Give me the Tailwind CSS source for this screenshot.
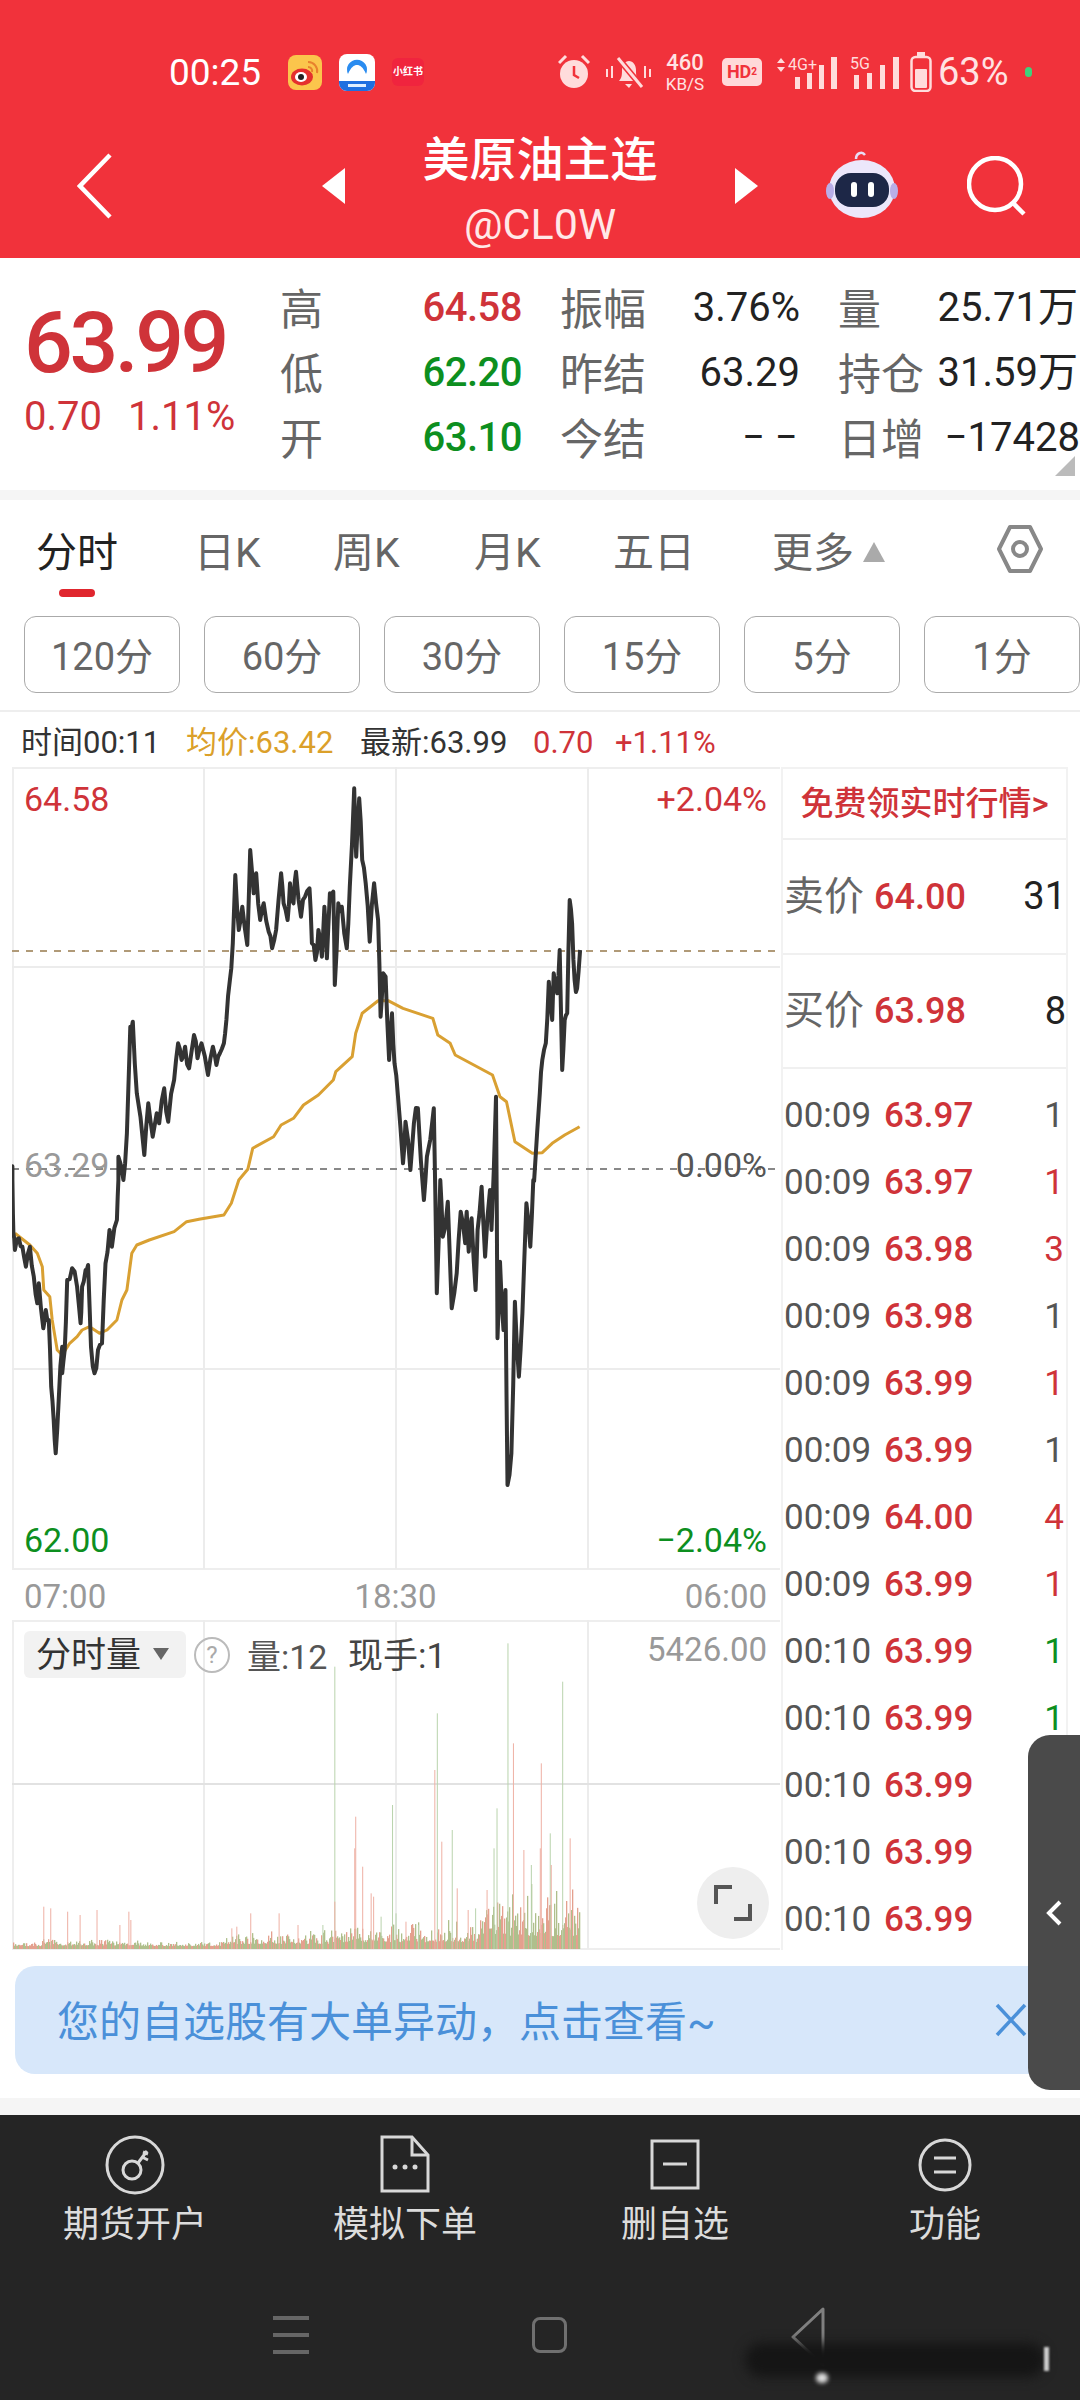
<!DOCTYPE html>
<html lang="zh-CN">
<head>
    <meta charset="UTF-8">
    <meta name="viewport" content="width=device-width, initial-scale=1.0">
    <title>美原油主连</title>
    <script src="https://cdn.jsdelivr.net/npm/@tailwindcss/browser@4"></script>
</head>
<body class="bg-white">
<div class="relative w-[1080px] h-[2400px] overflow-hidden bg-white font-['Roboto','Noto_Sans_CJK_SC',sans-serif]">

    <!-- Header -->
    <div class="h-[258px] bg-[#f1323b] text-white">
        <!-- Status bar -->
        <div class="flex items-center h-[108px] mt-0 pt-[36px] pl-[169px] text-[#ffe3e3]">
            <span class="w-[93px] text-[37px] leading-none whitespace-nowrap text-[#fff]">00:25</span>
            <svg class="ml-[26px] shrink-0" width="34" height="35" viewBox="0 0 34 35"><rect width="34" height="35" rx="8" fill="#fbc54c"/><ellipse cx="14" cy="22" rx="11" ry="8.5" fill="#e5302d"/><ellipse cx="13" cy="22" rx="6" ry="5" fill="#fff"/><circle cx="13" cy="22" r="3" fill="#222"/><path d="M20 7a9 9 0 0 1 9 11M20 12a4 4 0 0 1 4 5" fill="none" stroke="#e8812d" stroke-width="2"/></svg>
            <svg class="ml-[17px] shrink-0" width="36" height="37" viewBox="0 0 36 37"><rect width="36" height="37" rx="8" fill="#fff"/><path d="M0 27h36v2a8 8 0 0 1-8 8H8a8 8 0 0 1-8-8z" fill="#1f6fe0"/><path d="M9 20a10 10 0 1 1 18 0c-3-7-6-9-9-9s-6 2-9 9z" fill="#2a8cf0"/><rect x="9" y="30" width="18" height="3" fill="#dfeeff"/></svg>
            <div class="ml-[17px] w-[32px] h-[28px] rounded-[6px] bg-[#f0243e] flex items-center justify-center overflow-hidden"><span class="text-[10px] leading-none whitespace-nowrap text-white font-bold">小红书</span></div>
            <svg class="ml-[134px] shrink-0" width="32" height="36" viewBox="0 0 32 36"><circle cx="16" cy="20" r="14" fill="#ffdcdc"/><path d="M16 12v9l5 3" fill="none" stroke="#f1323b" stroke-width="2.5"/><path d="M1 9l7-7M31 9l-7-7" stroke="#ffdcdc" stroke-width="3"/></svg>
            <svg class="ml-[15px] shrink-0" width="47" height="36" viewBox="0 0 47 36"><path d="M14 27c3-3 3-7 3-11 0-5 3-9 7-9s7 4 7 9c0 4 0 8 3 11z" fill="#ffdcdc"/><path d="M20 30h7l-3 4z" fill="#ffdcdc"/><path d="M13 4l24 29" stroke="#f1323b" stroke-width="6"/><path d="M13 4l24 29" stroke="#ffdcdc" stroke-width="3"/><path d="M2 15v8M7 12v12M40 12v12M45 15v8" stroke="#ffdcdc" stroke-width="2"/></svg>
            <div class="ml-[10px] w-[46px] flex flex-col items-center">
                <span class="block h-[22px] text-[22px] leading-[22px] font-medium">460</span>
                <span class="block h-[18px] mt-[1px] text-[17px] leading-[18px] whitespace-nowrap">KB/S</span>
            </div>
            <div class="ml-[14px] w-[40px] h-[28px] rounded-[5px] bg-[#ffd9d9] flex items-center justify-center"><span class="text-[18px] leading-none font-bold text-[#f1323b]">HD</span><span class="text-[10px] leading-none font-bold text-[#f1323b]">2</span></div>
            <svg class="ml-[13px] shrink-0" width="63" height="34" viewBox="0 0 63 34"><path d="M2 8l4-5 4 5zM2 12l4 5 4-5z" fill="#ffdcdc"/><text x="13" y="15" font-size="16" font-family="Roboto" fill="#ffdcdc">4G+</text><path d="M20 22h5v12h-5zM32 18h5v16h-5zM44 10h5v24h-5zM56 2h6v32h-6z" fill="#ffdcdc"/></svg>
            <svg class="ml-[12px] shrink-0" width="50" height="34" viewBox="0 0 50 34"><text x="0" y="14" font-size="16" font-family="Roboto" fill="#ffdcdc">5G</text><path d="M4 20h5v14H4zM17 18h5v16h-5zM30 10h5v24h-5zM43 2h6v32h-6z" fill="#ffdcdc"/></svg>
            <svg class="ml-[10px] shrink-0" width="22" height="40" viewBox="0 0 22 40"><rect x="1.5" y="5" width="19" height="34" rx="4" fill="none" stroke="#ffdcdc" stroke-width="2.5"/><rect x="7" y="0" width="8" height="4" fill="#ffdcdc"/><rect x="5" y="17" width="12" height="19" rx="1" fill="#ffdcdc"/></svg>
            <span class="ml-[6px] w-[71px] text-[38px] leading-none whitespace-nowrap">63%</span>
            <span class="ml-[16px] w-[7px] h-[10px] rounded-full bg-[#3fd17c]"></span>
        </div>
        <!-- Title row -->
        <div class="flex items-center h-[132px] mt-[18px] pb-[12px] pl-[77px]">
            <svg class="shrink-0" width="35" height="66" viewBox="0 0 35 66"><path d="M33 2L3 33l30 31" fill="none" stroke="#fff" stroke-width="4.5"/></svg>
            <svg class="ml-[210px] shrink-0" width="23" height="36" viewBox="0 0 23 36"><path d="M23 0v36L0 18z" fill="#fff"/></svg>
            <div class="w-[390px] flex flex-col items-center -mb-[12px]">
                <span class="h-[64px] text-[47px] leading-[64px] font-medium whitespace-nowrap">美原油主连</span>
                <span class="h-[64px] text-[43px] leading-[64px] text-[#ffe8e8] whitespace-nowrap">@CL0W</span>
            </div>
            <svg class="shrink-0" width="23" height="36" viewBox="0 0 23 36"><path d="M0 0v36l23-18z" fill="#fff"/></svg>
            <svg class="ml-[68px] shrink-0" width="72" height="70" viewBox="0 0 72 70"><path d="M30 8c0-6 6-8 9-4" fill="none" stroke="#e8dcf5" stroke-width="2.5"/><ellipse cx="36" cy="38" rx="33" ry="29" fill="#ece7fb"/><ellipse cx="4" cy="40" rx="4" ry="8" fill="#b9aee8"/><ellipse cx="68" cy="40" rx="4" ry="8" fill="#b9aee8"/><rect x="9" y="22" width="54" height="34" rx="16" fill="#1d2747"/><rect x="25" y="31" width="6" height="15" rx="3" fill="#fff"/><rect x="42" y="31" width="6" height="15" rx="3" fill="#fff"/></svg>
            <svg class="ml-[69px] shrink-0" width="60" height="60" viewBox="0 0 60 60"><circle cx="28" cy="28" r="26" fill="none" stroke="#fff" stroke-width="4.5"/><path d="M46 47l11 11" stroke="#fff" stroke-width="4.5"/></svg>
        </div>
    </div>

    <!-- Quote -->
    <div class="relative flex h-[232px] bg-white">
        <div class="w-[280px] shrink-0 pl-[24px] pt-[39px]">
            <div class="text-[86px] leading-[92px] font-medium tracking-[-3.5px] text-[#cf3339] whitespace-nowrap">63.99</div>
            <div class="flex mt-[6px] text-[40px] leading-[44px] text-[#cf3339] whitespace-nowrap">
                <span class="w-[104px]">0.70</span><span>1.11%</span>
            </div>
        </div>
        <div class="grid grid-cols-[242px_240px_240px] gap-x-[38px] auto-rows-[65px] pt-[20px] text-[43px] text-[#666] whitespace-nowrap items-center">
            <div class="flex justify-between"><span>高</span><span class="text-[#cf3339] font-medium text-[40px] tracking-[-0.5px]">64.58</span></div>
            <div class="flex justify-between"><span>振幅</span><span class="text-[#222] text-[40px]">3.76%</span></div>
            <div class="flex justify-between"><span>量</span><span class="text-[#222] text-[40px]">25.71万</span></div>
            <div class="flex justify-between"><span>低</span><span class="text-[#0d8f1f] font-medium text-[40px] tracking-[-0.5px]">62.20</span></div>
            <div class="flex justify-between"><span>昨结</span><span class="text-[#222] text-[40px]">63.29</span></div>
            <div class="flex justify-between"><span>持仓</span><span class="text-[#222] text-[40px]">31.59万</span></div>
            <div class="flex justify-between"><span>开</span><span class="text-[#0d8f1f] font-medium text-[40px] tracking-[-0.5px]">63.10</span></div>
            <div class="flex justify-between"><span>今结</span><span class="text-[#222] text-[40px] tracking-[10px] -mr-[8px]">−−</span></div>
            <div class="flex justify-between"><span>日增</span><span class="text-[#222] text-[40px] -mr-[2px]">−17428</span></div>
        </div>
        <svg class="absolute right-[5px] bottom-[14px]" width="20" height="20" viewBox="0 0 20 20"><path d="M20 0v20H0z" fill="#bbb"/></svg>
    </div>
    <div class="h-[10px] bg-[#f5f5f5]"></div>

    <!-- Period tabs -->
    <div class="flex items-start h-[116px] pt-[31px] pl-[36px] text-[41px] leading-[44px] text-[#666] whitespace-nowrap">
        <div class="w-[82px] flex flex-col items-center text-[#222]"><span>分时</span><span class="block mt-[14px] w-[36px] h-[8px] rounded-full bg-[#e0262e]"></span></div>
        <span class="ml-[76px] w-[66px]">日K</span>
        <span class="ml-[73px] w-[67px]">周K</span>
        <span class="ml-[74px] w-[66px]">月K</span>
        <span class="ml-[73px] w-[77px]">五日</span>
        <span class="ml-[82px] w-[82px]">更多</span>
        <svg class="ml-[9px] mt-[11px] shrink-0" width="22" height="20" viewBox="0 0 22 20"><path d="M11 0l11 20H0z" fill="#aaa"/></svg>
        <svg class="ml-[112px] -mt-[7px] shrink-0" width="46" height="50" viewBox="0 0 46 50"><path d="M13 3h20l11 22-11 22H13L2 25z" fill="none" stroke="#888" stroke-width="4" stroke-linejoin="round"/><circle cx="23" cy="25" r="7" fill="none" stroke="#888" stroke-width="4"/></svg>
    </div>

    <!-- Interval buttons -->
    <div class="flex gap-[24px] pl-[24px] h-[96px] border-b-2 border-[#eee]">
        <div class="w-[156px] h-[77px] shrink-0 flex items-center justify-center pt-[5px] rounded-[12px] border border-[#aaa] text-[38px] text-[#666]">120分</div>
        <div class="w-[156px] h-[77px] shrink-0 flex items-center justify-center pt-[5px] rounded-[12px] border border-[#aaa] text-[38px] text-[#666]">60分</div>
        <div class="w-[156px] h-[77px] shrink-0 flex items-center justify-center pt-[5px] rounded-[12px] border border-[#aaa] text-[38px] text-[#666]">30分</div>
        <div class="w-[156px] h-[77px] shrink-0 flex items-center justify-center pt-[5px] rounded-[12px] border border-[#aaa] text-[38px] text-[#666]">15分</div>
        <div class="w-[156px] h-[77px] shrink-0 flex items-center justify-center pt-[5px] rounded-[12px] border border-[#aaa] text-[38px] text-[#666]">5分</div>
        <div class="w-[156px] h-[77px] shrink-0 flex items-center justify-center pt-[5px] rounded-[12px] border border-[#aaa] text-[38px] text-[#666]">1分</div>
    </div>

    <!-- Crosshair info -->
    <div class="flex items-center h-[55px] pl-[21px] pt-[5px] text-[31px] leading-none whitespace-nowrap">
        <span class="w-[165px] text-[#333]">时间00:11</span>
        <span class="w-[174px] text-[#dba02a]">均价:63.42</span>
        <span class="w-[173px] text-[#333]">最新:63.99</span>
        <span class="w-[82px] text-[#cf3339]">0.70</span>
        <span class="text-[#cf3339]">+1.11%</span>
    </div>

    <!-- Charts + trade list -->
    <div class="flex h-[1183px]">
        <div class="w-[780px] shrink-0 pl-[12px]">
            <div class="relative h-[803px] border-t-2 border-l-2 border-b-2 border-[#eee]">
                <svg id="priceChart" class="absolute -left-[2px] -top-[2px]" width="768" height="803" viewBox="12 767 768 803"></svg>
                <span class="absolute left-[10px] top-[10px] text-[34px] leading-[40px] text-[#cf3339]">64.58</span>
                <span class="absolute right-[13px] top-[10px] text-[34px] leading-[40px] text-[#cf3339]">+2.04%</span>
                <span class="absolute left-[10px] top-[376px] text-[34px] leading-[40px] text-[#999]">63.29</span>
                <span class="absolute right-[13px] top-[376px] text-[34px] leading-[40px] text-[#555]">0.00%</span>
                <span class="absolute left-[10px] bottom-[8px] text-[34px] leading-[40px] text-[#0d8f1f]">62.00</span>
                <span class="absolute right-[13px] bottom-[8px] text-[34px] leading-[40px] text-[#0d8f1f]">−2.04%</span>
            </div>
            <div class="flex justify-between items-center h-[50px] pt-[3px] pl-[12px] pr-[13px] text-[33px] text-[#999]">
                <span>07:00</span><span>18:30</span><span>06:00</span>
            </div>
            <div class="relative h-[330px] border-t-2 border-l-2 border-b-2 border-[#eee]">
                <svg id="volumeChart" class="absolute -left-[2px] -top-[2px]" width="768" height="330" viewBox="12 1620 768 330"></svg>
                <div class="absolute left-[10px] top-[9px] flex items-center h-[47px] w-[162px] pl-[12px] pt-[4px] rounded-[6px] bg-[#f2f2f2] text-[35px] text-[#333] whitespace-nowrap">
                    <span>分时量</span>
                    <svg class="ml-[12px] -mt-[6px]" width="16" height="12" viewBox="0 0 16 12"><path d="M0 0h16L8 12z" fill="#666"/></svg>
                </div>
                <div class="absolute left-[180px] top-[15px] w-[36px] h-[36px] flex items-center justify-center rounded-full border-2 border-[#bbb] text-[24px] leading-none text-[#aaa]">?</div>
                <span class="absolute left-[233px] top-[13px] text-[34px] leading-[44px] text-[#555] whitespace-nowrap">量:12</span>
                <span class="absolute left-[334px] top-[13px] text-[35px] leading-[44px] text-[#444] whitespace-nowrap">现手:1</span>
                <span class="absolute right-[13px] top-[6px] text-[33px] leading-[44px] text-[#999]">5426.00</span>
                <div class="absolute left-[683px] top-[245px] w-[72px] h-[72px] rounded-full bg-[#eee] flex items-center justify-center">
                    <svg width="38" height="38" viewBox="0 0 38 38"><path d="M2 20V3h16M36 20v15H20" fill="none" stroke="#555" stroke-width="4"/></svg>
                </div>
            </div>
        </div>

        <!-- Trade list -->
        <div class="w-[287px] h-[1183px] ml-[1px] shrink-0 border-x-2 border-[#f2f2f2] border-t-2 whitespace-nowrap">
            <div class="h-[71px] flex items-center justify-center border-b-2 border-[#f0f0f0] text-[33px] font-medium text-[#cf3339]">免费领实时行情&gt;</div>
            <div class="h-[115px] flex items-center pl-[1px] border-b-2 border-[#f0f0f0]">
                <span class="w-[90px] text-[40px] text-[#666]">卖价</span><span class="text-[36px] font-medium text-[#cf3339]">64.00</span><span class="ml-auto text-[38px] text-[#222]">31</span>
            </div>
            <div class="h-[114px] flex items-center pl-[1px] border-b-2 border-[#f0f0f0]">
                <span class="w-[90px] text-[40px] text-[#666]">买价</span><span class="text-[36px] font-medium text-[#cf3339]">63.98</span><span class="ml-auto text-[38px] text-[#222]">8</span>
            </div>
            <div class="pt-[14px] pl-[1px] pr-[2px] text-[35px]">
                <div class="h-[67px] flex items-center"><span class="w-[100px] text-[#555]">00:09</span><span class="font-medium text-[#cf3339]">63.97</span><span class="ml-auto text-[#555]">1</span></div>
                <div class="h-[67px] flex items-center"><span class="w-[100px] text-[#555]">00:09</span><span class="font-medium text-[#cf3339]">63.97</span><span class="ml-auto text-[#cf3339]">1</span></div>
                <div class="h-[67px] flex items-center"><span class="w-[100px] text-[#555]">00:09</span><span class="font-medium text-[#cf3339]">63.98</span><span class="ml-auto text-[#cf3339]">3</span></div>
                <div class="h-[67px] flex items-center"><span class="w-[100px] text-[#555]">00:09</span><span class="font-medium text-[#cf3339]">63.98</span><span class="ml-auto text-[#555]">1</span></div>
                <div class="h-[67px] flex items-center"><span class="w-[100px] text-[#555]">00:09</span><span class="font-medium text-[#cf3339]">63.99</span><span class="ml-auto text-[#cf3339]">1</span></div>
                <div class="h-[67px] flex items-center"><span class="w-[100px] text-[#555]">00:09</span><span class="font-medium text-[#cf3339]">63.99</span><span class="ml-auto text-[#555]">1</span></div>
                <div class="h-[67px] flex items-center"><span class="w-[100px] text-[#555]">00:09</span><span class="font-medium text-[#cf3339]">64.00</span><span class="ml-auto text-[#cf3339]">4</span></div>
                <div class="h-[67px] flex items-center"><span class="w-[100px] text-[#555]">00:09</span><span class="font-medium text-[#cf3339]">63.99</span><span class="ml-auto text-[#cf3339]">1</span></div>
                <div class="h-[67px] flex items-center"><span class="w-[100px] text-[#555]">00:10</span><span class="font-medium text-[#cf3339]">63.99</span><span class="ml-auto text-[#0d8f1f]">1</span></div>
                <div class="h-[67px] flex items-center"><span class="w-[100px] text-[#555]">00:10</span><span class="font-medium text-[#cf3339]">63.99</span><span class="ml-auto text-[#0d8f1f]">1</span></div>
                <div class="h-[67px] flex items-center"><span class="w-[100px] text-[#555]">00:10</span><span class="font-medium text-[#cf3339]">63.99</span></div>
                <div class="h-[67px] flex items-center"><span class="w-[100px] text-[#555]">00:10</span><span class="font-medium text-[#cf3339]">63.99</span></div>
                <div class="h-[67px] flex items-center"><span class="w-[100px] text-[#555]">00:10</span><span class="font-medium text-[#cf3339]">63.99</span></div>
            </div>
        </div>
    </div>

    <!-- Notice -->
    <div class="h-[148px] pt-[16px] pl-[15px] pr-[20px]">
        <div class="flex items-center justify-between h-[108px] pl-[42px] pr-[33px] pt-[4px] rounded-[20px] bg-[#d7e7fa] text-[42px] text-[#4a90d9] whitespace-nowrap">
            <span>您的自选股有大单异动，点击查看~</span>
            <svg class="-mt-[4px]" width="32" height="34" viewBox="0 0 32 34"><path d="M2 2l28 30M30 2L2 32" fill="none" stroke="#4a90d9" stroke-width="3.5"/></svg>
        </div>
    </div>
    <div class="h-[17px] bg-[#f5f5f5]"></div>

    <!-- Bottom toolbar -->
    <div class="h-[285px] bg-[#252525] text-[#dcdcdc]">
        <div class="grid grid-cols-4 pt-[20px]">
            <div class="flex flex-col items-center">
                <svg width="60" height="60" viewBox="0 0 60 60"><circle cx="30" cy="30" r="28" fill="none" stroke="#d8d8d8" stroke-width="3"/><circle cx="27" cy="35" r="9" fill="none" stroke="#d8d8d8" stroke-width="3"/><path d="M33 28l9-12M37 22l6 3M38 17l5 2" fill="none" stroke="#d8d8d8" stroke-width="3"/></svg>
                <span class="mt-[5px] text-[36px] leading-[50px]">期货开户</span>
            </div>
            <div class="flex flex-col items-center">
                <svg width="60" height="60" viewBox="0 0 60 60"><path d="M7 2h30l16 18v36H7z" fill="none" stroke="#d8d8d8" stroke-width="3"/><path d="M37 2v18h16" fill="none" stroke="#d8d8d8" stroke-width="3"/><circle cx="20" cy="32" r="2.5" fill="#d8d8d8"/><circle cx="30" cy="32" r="2.5" fill="#d8d8d8"/><circle cx="40" cy="32" r="2.5" fill="#d8d8d8"/></svg>
                <span class="mt-[5px] text-[36px] leading-[50px]">模拟下单</span>
            </div>
            <div class="flex flex-col items-center">
                <svg width="60" height="60" viewBox="0 0 60 60"><rect x="7" y="6" width="46" height="47" fill="none" stroke="#d8d8d8" stroke-width="3"/><path d="M18 29h24" stroke="#d8d8d8" stroke-width="3"/></svg>
                <span class="mt-[5px] text-[36px] leading-[50px]">删自选</span>
            </div>
            <div class="flex flex-col items-center">
                <svg width="60" height="60" viewBox="0 0 60 60"><circle cx="30" cy="30" r="25" fill="none" stroke="#d8d8d8" stroke-width="3"/><path d="M19 23h22M19 37h22" stroke="#d8d8d8" stroke-width="3"/></svg>
                <span class="mt-[5px] text-[36px] leading-[50px]">功能</span>
            </div>
        </div>
        <!-- Phone nav bar -->
        <div class="relative flex items-center h-[40px] mt-[65px] pl-[273px]">
            <div class="w-[36px] flex flex-col gap-[13px]"><span class="h-[4px] bg-[#666]"></span><span class="h-[4px] bg-[#666]"></span><span class="h-[4px] bg-[#666]"></span></div>
            <div class="ml-[223px] w-[35px] h-[36px] rounded-[8px] border-[3px] border-[#707070]"></div>
            <svg class="ml-[223px] mt-[4px]" width="36" height="60" viewBox="0 0 36 60"><path d="M33 2L3 30l30 28z" fill="none" stroke="#808080" stroke-width="3" stroke-linejoin="round"/></svg>
            <div class="absolute left-[745px] top-[28px] w-[300px] h-[34px] rounded-full bg-[#151515] blur-[6px]"></div>
            <span class="absolute left-[816px] top-[58px] w-[12px] h-[10px] rounded-full bg-[#ddd] blur-[2px]"></span>
            <span class="absolute left-[1044px] top-[32px] w-[5px] h-[24px] bg-[#ccc] blur-[1px]"></span>
        </div>
    </div>

    <!-- Floating side handle -->
    <div class="absolute right-0 top-[1735px] w-[52px] h-[355px] rounded-l-[22px] bg-[#4a4a4a] flex items-center justify-center">
        <svg width="18" height="26" viewBox="0 0 18 26"><path d="M15 2L4 13l11 11" fill="none" stroke="#fff" stroke-width="4"/></svg>
    </div>
</div>

<script>
    const NS = 'http://www.w3.org/2000/svg';

    // traced from the reference, in zoomed crop coordinates
    const lowX = (zx) => zx / 2.01;
    const upperY = (zy) => 760 + zy / 3;
    const lowerY = (zy) => 1180 + zy / 3;

    const priceLine = [
        [25,upperY(1226)],[25,lowerY(0)],[27,lowerY(160)],[30,lowerY(210)],[38,lowerY(175)],[45,lowerY(200)],[52,lowerY(260)],[60,lowerY(200)],[68,lowerY(290)],[75,lowerY(370)],[78,lowerY(310)],[87,lowerY(445)],[92,lowerY(390)],[98,lowerY(420)],[103,lowerY(620)],[108,lowerY(720)],[112,lowerY(820)],[118,lowerY(660)],[125,lowerY(500)],[125,lowerY(580)],[130,lowerY(510)],[135,lowerY(300)],[145,lowerY(265)],[155,lowerY(320)],[162,lowerY(430)],[165,lowerY(320)],[172,lowerY(270)],[177,lowerY(255)],[183,lowerY(500)],[190,lowerY(580)],[197,lowerY(510)],[205,lowerY(490)],[212,lowerY(250)],[220,lowerY(150)],[225,lowerY(200)],[235,lowerY(120)],[238,lowerY(0)],
        [238,upperY(1190)],[248,upperY(1260)],[255,upperY(1120)],[262,upperY(800)],[267,upperY(785)],[275,upperY(1000)],[290,upperY(1185)],[298,upperY(1030)],[307,upperY(1130)],[315,upperY(1060)],[320,upperY(1090)],[330,upperY(985)],[338,upperY(1085)],[350,upperY(960)],[358,upperY(850)],[365,upperY(900)],[372,upperY(860)],[380,upperY(925)],[390,upperY(825)],[397,upperY(895)],[405,upperY(850)],[418,upperY(945)],[428,upperY(860)],[435,upperY(915)],[442,upperY(880)],[450,upperY(850)],[455,upperY(780)],[462,upperY(660)],[468,upperY(550)],[473,upperY(345)],[480,upperY(510)],[487,upperY(440)],[497,upperY(555)],[503,upperY(270)],[510,upperY(400)],[515,upperY(340)],[523,upperY(480)],[530,upperY(430)],[540,upperY(515)],[547,upperY(565)],[555,upperY(510)],[565,upperY(340)],[570,upperY(430)],[578,upperY(480)],[583,upperY(370)],[590,upperY(430)],[595,upperY(335)],[605,upperY(470)],[613,upperY(410)],[622,upperY(385)],[627,upperY(550)],[634,upperY(600)],[640,upperY(510)],[647,upperY(590)],[652,upperY(440)],[657,upperY(595)],[663,upperY(400)],[670,upperY(395)],[673,upperY(675)],[680,upperY(430)],[687,upperY(440)],[697,upperY(565)],[703,upperY(380)],[712,upperY(85)],[716,upperY(290)],[722,upperY(115)],[728,upperY(300)],[735,upperY(370)],[743,upperY(545)],[752,upperY(370)],[760,upperY(480)],[765,upperY(770)],[770,upperY(640)],[775,upperY(650)],[782,upperY(900)],[788,upperY(760)],[793,upperY(910)],[800,upperY(1010)],[810,upperY(1210)],[815,upperY(1085)],[825,upperY(1230)],[832,upperY(1090)],[840,upperY(1045)],[852,lowerY(60)],[858,upperY(1190)],[872,upperY(1045)],[878,lowerY(340)],[885,lowerY(0)],[890,lowerY(170)],[900,lowerY(65)],[908,lowerY(385)],[918,lowerY(280)],[926,lowerY(95)],[935,lowerY(190)],[938,lowerY(95)],[942,lowerY(215)],[948,lowerY(115)],[956,lowerY(330)],[960,lowerY(150)],[968,lowerY(20)],[975,lowerY(230)],[985,lowerY(30)],[988,lowerY(150)],[997,upperY(1010)],[1000,lowerY(475)],[1005,lowerY(245)],[1012,lowerY(450)],[1016,lowerY(330)],[1020,lowerY(915)],[1028,lowerY(820)],[1035,lowerY(365)],[1043,lowerY(590)],[1050,lowerY(400)],[1058,lowerY(70)],[1066,lowerY(200)],[1072,lowerY(0)],
        [1075,upperY(1230)],[1085,upperY(1000)],[1090,upperY(900)],[1097,upperY(850)],[1103,upperY(665)],[1110,upperY(780)],[1113,upperY(640)],[1120,upperY(700)],[1125,upperY(570)],[1130,upperY(930)],[1135,upperY(780)],[1140,upperY(760)],[1145,upperY(420)],[1150,upperY(490)],[1155,upperY(660)],[1160,upperY(685)],[1166,upperY(570)]
    ];

    const avgLine = [
        [30,lowerY(160)],[60,lowerY(195)],[75,lowerY(220)],[85,lowerY(260)],[88,lowerY(330)],[100,lowerY(350)],[105,lowerY(420)],[115,lowerY(510)],[125,lowerY(525)],[140,lowerY(490)],[155,lowerY(470)],[165,lowerY(450)],[180,lowerY(440)],[200,lowerY(460)],[215,lowerY(450)],[235,lowerY(420)],[245,lowerY(360)],[255,lowerY(330)],[265,lowerY(220)],[275,lowerY(195)],[300,lowerY(180)],[350,lowerY(155)],[375,lowerY(125)],[400,lowerY(118)],[450,lowerY(105)],[465,lowerY(70)],[480,lowerY(0)],
        [498,upperY(1228)],[508,upperY(1165)],[550,upperY(1130)],[565,upperY(1095)],[590,upperY(1075)],[610,upperY(1035)],[640,upperY(1005)],[670,upperY(960)],[675,upperY(935)],[708,upperY(890)],[715,upperY(820)],[728,upperY(760)],[760,upperY(722)],[780,upperY(722)],[810,upperY(745)],[870,upperY(775)],[880,upperY(825)],[905,upperY(850)],[915,upperY(885)],[990,upperY(945)],[1005,upperY(1010)],[1018,upperY(1025)],[1035,upperY(1145)],[1070,upperY(1180)],[1090,upperY(1178)],[1110,upperY(1150)],[1135,upperY(1125)],[1165,upperY(1100)]
    ];

    // spikes: zoom x, zoom y (bar top in the volume crop), colour
    const spikes = [
        [672,200,'g'],[714,650,'r'],[712,745,'r'],[728,800,'r'],[788,615,'g'],[873,510,'r'],[878,340,'g'],[887,725,'r'],[908,690,'g'],[918,865,'r'],[998,625,'g'],[1020,130,'g'],[1031,430,'r'],[1052,750,'r'],[1067,795,'g'],[1087,490,'r'],[1085,745,'r'],[1105,700,'g'],[1107,795,'r'],[1130,245,'g'],[1145,715,'r'],[992,745,'g'],[978,870,'r'],[955,925,'g'],[940,930,'r'],
        [87,920,'r'],[101,925,'r'],[135,935,'r'],[160,945,'r'],[194,930,'r'],[240,975,'r'],[258,935,'r'],[262,960,'r'],[465,985,'r'],[475,980,'r'],[503,940,'r'],[560,940,'r'],[598,975,'r'],[648,975,'g'],[672,905,'r'],[745,880,'r'],[750,890,'r'],[765,950,'g'],[795,940,'g'],[815,965,'r'],[840,975,'g']
    ];

    let seed = 7;
    function rand() {
        seed = (seed * 16807) % 2147483647;
        return seed / 2147483647;
    }

    function add(svg, name, attrs) {
        const el = document.createElementNS(NS, name);
        for (const k in attrs) el.setAttribute(k, attrs[k]);
        svg.appendChild(el);
    }

    function gridLine(svg, x1, y1, x2, y2, color) {
        add(svg, 'line', { x1, y1, x2, y2, stroke: color || '#ececec', 'stroke-width': 2 });
    }

    function toPoints(line, jitter) {
        const out = [];
        line.forEach((p, i) => {
            out.push(lowX(p[0]).toFixed(1) + ',' + p[1].toFixed(1));
            const next = line[i + 1];
            if (jitter && next) {
                const y = (p[1] + next[1]) / 2 + (rand() - 0.5) * jitter;
                out.push(lowX((p[0] + next[0]) / 2).toFixed(1) + ',' + y.toFixed(1));
            }
        });
        return out.join(' ');
    }

    const price = document.getElementById('priceChart');
    [204, 396, 588].forEach((x) => gridLine(price, x, 767, x, 1569));
    [967, 1369].forEach((y) => gridLine(price, 12, y, 780, y));
    add(price, 'line', { x1: 12, y1: 951, x2: 780, y2: 951, stroke: '#b09a78', 'stroke-width': 2, 'stroke-dasharray': '7 7' });
    add(price, 'line', { x1: 12, y1: 1169, x2: 780, y2: 1169, stroke: '#888', 'stroke-width': 2, 'stroke-dasharray': '7 7' });
    add(price, 'polyline', { points: toPoints(avgLine, 0), fill: 'none', stroke: '#d9a032', 'stroke-width': 3, 'stroke-linejoin': 'round' });
    add(price, 'polyline', { points: toPoints(priceLine, 16), fill: 'none', stroke: '#333', 'stroke-width': 4, 'stroke-linejoin': 'round' });

    const volume = document.getElementById('volumeChart');
    const volColor = { r: '#eeb0a4', g: '#b9d3ad' };
    const baseColor = { r: '#e4a08e', g: '#afbf8c' };
    const baseY = 1949;
    [204, 396, 588].forEach((x) => gridLine(volume, x, 1620, x, 1949));
    gridLine(volume, 12, 1784, 780, 1784, '#e2e2e2');

    // dense low bars, growing towards the latest session
    for (let x = 13; x < 580; x += 1) {
        let env = 3;
        if (x > 40 && x < 140) env = 5;
        if (x > 220 && x < 330) env = 10;
        if (x >= 330 && x < 480) env = 16;
        if (x >= 480) env = 36;
        const h = 2 + env * 0.3 + rand() * rand() * env * 1.5;
        add(volume, 'rect', { x, y: baseY - h, width: 1.3, height: h, fill: rand() > 0.45 ? baseColor.g : baseColor.r });
    }
    spikes.forEach((s) => {
        const x = lowX(s[0]);
        const y = 1600 + s[1] / 3;
        add(volume, 'rect', { x, y, width: 1, height: baseY - y, fill: volColor[s[2]] });
    });
</script>
</body>
</html>
